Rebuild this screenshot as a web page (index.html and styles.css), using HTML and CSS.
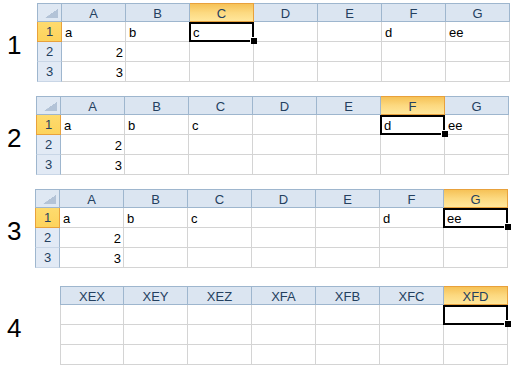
FILE: index.html
```html
<!DOCTYPE html>
<html lang="en">
<head>
    <meta charset="UTF-8">
    <meta name="viewport" content="width=device-width, initial-scale=1.0">
    <title>Selected cell in sheet</title>
    <link rel="stylesheet" href="styles.css">
</head>
<body>
    <div class="page">
        <div class="block">
            <div class="label l1">1</div>
            <div class="sheet">
                <div class="corner"><span class="tri"></span></div>
                <div class="hd">A</div><div class="hd">B</div><div class="hd on">C</div><div class="hd">D</div><div class="hd">E</div><div class="hd">F</div><div class="hd">G</div>
                <div class="rh on">1</div>
                <div class="cell">a</div><div class="cell">b</div><div class="cell sel">c</div><div class="cell"></div><div class="cell"></div><div class="cell">d</div><div class="cell">ee</div>
                <div class="rh">2</div>
                <div class="cell num">2</div><div class="cell"></div><div class="cell"></div><div class="cell"></div><div class="cell"></div><div class="cell"></div><div class="cell"></div>
                <div class="rh">3</div>
                <div class="cell num">3</div><div class="cell"></div><div class="cell"></div><div class="cell"></div><div class="cell"></div><div class="cell"></div><div class="cell"></div>
            </div>
        </div>

        <div class="block">
            <div class="label l2">2</div>
            <div class="sheet">
                <div class="corner"><span class="tri"></span></div>
                <div class="hd">A</div><div class="hd">B</div><div class="hd">C</div><div class="hd">D</div><div class="hd">E</div><div class="hd on">F</div><div class="hd">G</div>
                <div class="rh on">1</div>
                <div class="cell">a</div><div class="cell">b</div><div class="cell">c</div><div class="cell"></div><div class="cell"></div><div class="cell sel">d</div><div class="cell">ee</div>
                <div class="rh">2</div>
                <div class="cell num">2</div><div class="cell"></div><div class="cell"></div><div class="cell"></div><div class="cell"></div><div class="cell"></div><div class="cell"></div>
                <div class="rh">3</div>
                <div class="cell num">3</div><div class="cell"></div><div class="cell"></div><div class="cell"></div><div class="cell"></div><div class="cell"></div><div class="cell"></div>
            </div>
        </div>

        <div class="block">
            <div class="label l3">3</div>
            <div class="sheet">
                <div class="corner"><span class="tri"></span></div>
                <div class="hd">A</div><div class="hd">B</div><div class="hd">C</div><div class="hd">D</div><div class="hd">E</div><div class="hd">F</div><div class="hd on">G</div>
                <div class="rh on">1</div>
                <div class="cell">a</div><div class="cell">b</div><div class="cell">c</div><div class="cell"></div><div class="cell"></div><div class="cell">d</div><div class="cell sel">ee</div>
                <div class="rh">2</div>
                <div class="cell num">2</div><div class="cell"></div><div class="cell"></div><div class="cell"></div><div class="cell"></div><div class="cell"></div><div class="cell"></div>
                <div class="rh">3</div>
                <div class="cell num">3</div><div class="cell"></div><div class="cell"></div><div class="cell"></div><div class="cell"></div><div class="cell"></div><div class="cell"></div>
            </div>
        </div>

        <div class="block last">
            <div class="label l4">4</div>
            <div class="sheet wide">
                <div class="hd first">XEX</div><div class="hd">XEY</div><div class="hd">XEZ</div><div class="hd">XFA</div><div class="hd">XFB</div><div class="hd">XFC</div><div class="hd on">XFD</div>
                <div class="cell first"></div><div class="cell"></div><div class="cell"></div><div class="cell"></div><div class="cell"></div><div class="cell"></div><div class="cell sel"></div>
                <div class="cell first"></div><div class="cell"></div><div class="cell"></div><div class="cell"></div><div class="cell"></div><div class="cell"></div><div class="cell"></div>
                <div class="cell first"></div><div class="cell"></div><div class="cell"></div><div class="cell"></div><div class="cell"></div><div class="cell"></div><div class="cell"></div>
            </div>
        </div>
    </div>
</body>
</html>
```

FILE: styles.css
```css
body {
    margin: 0;
    background: #fff;
    font-family: 'Liberation Sans', Arial, sans-serif;
    overflow: hidden;
}

.page {
    display: flex;
    flex-direction: column;
    gap: 14px;
    padding-top: 3px;
}

.block {
    display: flex;
    align-items: center;
}

.block.last {
    margin-top: 4px;
}

.label {
    box-sizing: border-box;
    padding-left: 7px;
    padding-top: 4px;
    font-size: 26px;
    line-height: 26px;
    color: #000;
}

.l1 { width: 37px; }
.l2 { width: 36px; }
.l3 { width: 35px; }
.l4 { width: 60px; }

.sheet {
    display: grid;
    grid-template-columns: 25px repeat(7, 64px);
    grid-template-rows: 19px repeat(3, 20px);
    font-size: 13px;
}

.sheet.wide {
    grid-template-columns: repeat(7, 64px);
}

.sheet > div {
    box-sizing: border-box;
}

.corner {
    position: relative;
    background: #dfe8f3;
    border: 1px solid #9eb6ce;
    border-width: 1px 1px 1px 1px;
}

.tri {
    position: absolute;
    right: 3px;
    bottom: 3px;
    width: 13px;
    height: 9px;
    background: linear-gradient(to top left, #b3c3d7 50%, transparent 51%);
}

.hd {
    background: #dbe5f1;
    border-top: 1px solid #9eb6ce;
    border-right: 1px solid #9eb6ce;
    border-bottom: 1px solid #9eb6ce;
    color: #24405f;
    text-align: center;
    line-height: 17px;
    padding-top: 1px;
}

.hd.first {
    border-left: 1px solid #9eb6ce;
}

.hd.on {
    background: linear-gradient(#f6c257, #fcd980 50%, #ffe79c);
    border-color: #e8a13c;
    border-right-color: #e8a13c;
}

.rh {
    background: #e2eaf5;
    border-left: 1px solid #9eb6ce;
    border-right: 1px solid #9eb6ce;
    border-bottom: 1px solid #c9d6e6;
    color: #24405f;
    text-align: center;
    line-height: 19px;
}

.rh.on {
    background: linear-gradient(#fedb6e, #fdd35c);
    border-color: #e8a13c;
}

.cell {
    border-right: 1px solid #d4d4d4;
    border-bottom: 1px solid #d4d4d4;
    color: #000;
    padding: 1px 3px 0;
    line-height: 19px;
    white-space: nowrap;
}

.cell.first {
    border-left: 1px solid #d4d4d4;
}

.num {
    text-align: right;
    padding-right: 2px;
}

.sel {
    position: relative;
}

.sel::before {
    content: "";
    position: absolute;
    left: -1px;
    top: 0;
    right: -1px;
    bottom: -1px;
    border: 2px solid #000;
}

.sel::after {
    content: "";
    position: absolute;
    right: -4px;
    bottom: -3px;
    width: 6px;
    height: 6px;
    background: #000;
    box-shadow: -1px -1px 0 #fff;
}
```
